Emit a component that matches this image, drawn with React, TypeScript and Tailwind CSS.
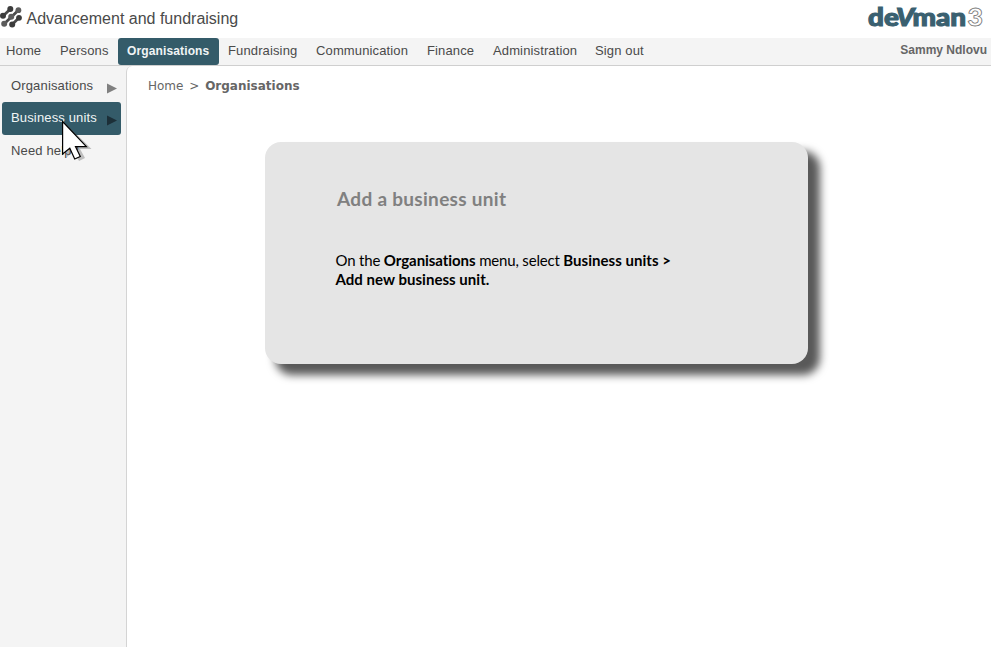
import React from "react";

type NavItem = { label: string; box: string; active?: boolean };

const NAV: NavItem[] = [
  { label: "Home", box: "w-[54px]" },
  { label: "Persons", box: "w-[67px]" },
  { label: "Organisations", box: "w-[101px]", active: true },
  { label: "Fundraising", box: "w-[88px]" },
  { label: "Communication", box: "w-[111px]" },
  { label: "Finance", box: "w-[66px]" },
  { label: "Administration", box: "w-[102px]" },
  { label: "Sign out", box: "w-[70px]" },
];

function DotsIcon() {
  return (
    <svg width="22" height="22" viewBox="0 0 22 22" className="shrink-0" strokeLinecap="round">
      <g stroke="#4a4a4a" strokeWidth="2.8">
        <path d="M3 10 10.4 3" />
        <path d="M4 18 18.6 4" />
        <path d="M12.2 18.4 19.2 11.6" />
      </g>
      <g fill="#3c3c3c">
        <circle cx="10.3" cy="3" r="3" />
        <circle cx="3" cy="9.8" r="3" />
        <circle cx="12.2" cy="18.4" r="3" />
        <circle cx="19" cy="11.8" r="2.9" />
      </g>
      <g fill="#5c5c5c">
        <circle cx="18.4" cy="4.2" r="2.9" />
        <circle cx="11.2" cy="10.8" r="3" />
        <circle cx="4.2" cy="17.8" r="3" />
      </g>
    </svg>
  );
}

function Brand() {
  return (
    <svg width="124" height="38" viewBox="0 0 124 38" overflow="visible" className="font-['Lato',sans-serif]">
      <text x="1" y="26" fontSize="24" fontWeight="900" fill="#3a6070" stroke="#3a6070" strokeWidth="1.1" textLength="98" lengthAdjust="spacingAndGlyphs">
        de<tspan fontStyle="italic" dx="-2.500">V</tspan><tspan dx="-1.500">man</tspan>
      </text>
      <text x="100.5" y="26.3" fontSize="24.5" fontWeight="900" textLength="15.5" lengthAdjust="spacingAndGlyphs" fill="#fff" stroke="#777" strokeWidth="0.8">3</text>
    </svg>
  );
}

function Arrow({ color, nudge }: { color: string; nudge: string }) {
  return (
    <svg width="10" height="11" viewBox="0 0 10 11" className={nudge}>
      <path d="M0 0.5 10 5.5 0 10.5Z" fill={color} />
    </svg>
  );
}

function Pointer() {
  return (
    <svg width="34" height="44" viewBox="0 0 34 44" className="pointer-events-none absolute left-[60px] top-[119px]">
      <path d="M7 6v32l7-6 5 10 6-3-5-9h11.500Z" fill="#555" opacity=".35" />
      <path d="M2.600 2.500v32.500l7.200-5.800 4.900 10.800 5.600-2.500-4.800-9.800h10.900Z" fill="#fff" stroke="#000" strokeWidth="1.2" />
    </svg>
  );
}

export default function App() {
  return (
    <div className="relative flex h-[647px] w-[991px] flex-col overflow-hidden bg-white font-['Liberation_Sans',Arial,sans-serif] text-[13px] text-[#4a4a4a]">
      <header className="flex h-[38px] shrink-0 items-start justify-between">
        <div className="flex pt-1.5">
          <DotsIcon />
          <h1 className="ml-[4.5px] pt-px text-base leading-6 whitespace-nowrap">Advancement and fundraising</h1>
        </div>
        <Brand />
      </header>
      <nav className="flex h-7 shrink-0 items-start justify-between border-b border-[#cfcfcf] bg-[#f4f4f4]">
        <div className="-ml-[3px] flex">
          {NAV.map((n) => (
            <a
              key={n.label}
              className={
                n.box + " h-[27px] whitespace-nowrap pl-[9px] " +
                (n.active
                  ? "rounded-[3px] bg-[#345b69] text-xs leading-[26px] font-bold tracking-[0.13px] text-[#f0f4f5]"
                  : "leading-[25px] tracking-[0.13px]")
              }
            >
              {n.label}
            </a>
          ))}
        </div>
        <span className="pr-1 text-xs leading-[25px] font-bold text-[#666]">Sammy Ndlovu</span>
      </nav>
      <div className="flex flex-1 bg-[#f4f4f4]">
        <aside className="w-[126px] shrink-0 pl-0.5 pt-[3px] tracking-[0.15px]">
          <div className="flex h-[33px] w-[119px] items-center justify-between pl-[9px] pr-1"><span>Organisations</span><Arrow color="#808080" nudge="mt-[5px]" /></div>
          <div className="flex h-[33px] w-[119px] items-center justify-between rounded-[3px] bg-[#345b69] pl-[9px] pr-1 text-[#f0f4f5]"><span className="pb-0.5">Business units</span><Arrow color="#1c2f38" nudge="mt-[3px]" /></div>
          <div className="flex h-[31px] items-center pl-[9px]">Need help?</div>
        </aside>
        <main className="flex-1 rounded-tl-[6px] border-l border-[#d4d4d4] bg-white">
          <div className="pl-[21px] pt-3 font-['DejaVu_Sans',Verdana,sans-serif] text-xs leading-4 text-[#666]">
            Home <span className="mx-[2px]">&gt;</span> <b>Organisations</b>
          </div>
          <section className="ml-[138px] mt-12 h-[222px] w-[543px] rounded-[16px] bg-[#e5e5e5] pl-[71px] pt-[45px] font-['Lato',sans-serif] shadow-[11px_10px_8px_1px_#595959]">
            <h2 className="ml-px text-[19px] leading-6 font-bold tracking-[0.3px] text-[#808080]">Add a business unit</h2>
            <p className="-ml-[0.5px] mt-10 text-[15px] leading-[19px] tracking-[-0.18px] text-black">
              On the <b className="tracking-[-0.06px]">Organisations</b> menu, select <b className="tracking-[0.03px]">Business units &gt;<br />Add new business unit.</b>
            </p>
          </section>
        </main>
      </div>
      <Pointer />
    </div>
  );
}
